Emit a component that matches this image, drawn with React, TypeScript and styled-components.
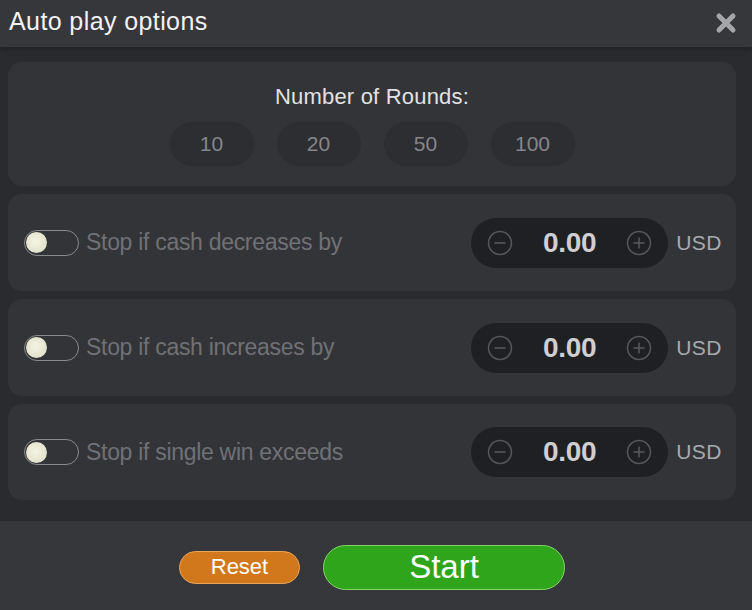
import React from "react";
import styled, { createGlobalStyle } from "styled-components";

const GlobalStyle = createGlobalStyle`
  html, body {
    margin: 0;
    padding: 0;
    background: #2a2b2f;
  }
  * {
    box-sizing: border-box;
  }
`;

const Modal = styled.div`
  width: 752px;
  height: 610px;
  display: flex;
  flex-direction: column;
  font-family: "Liberation Sans", Arial, sans-serif;
  background: #2a2b2f;
`;

const Header = styled.div`
  height: 47px;
  flex-shrink: 0;
  display: flex;
  align-items: center;
  justify-content: space-between;
  padding: 0 14px 4px 9px;
  background: #36373b;
  box-shadow: 0 2px 6px rgba(0, 0, 0, 0.25);
`;

const Title = styled.div`
  color: #f2f2f2;
  font-size: 25px;
  letter-spacing: 0.4px;
`;

const CloseButton = styled.div`
  width: 24px;
  height: 24px;
  display: flex;
  align-items: center;
  justify-content: center;
  margin-top: 2px;
`;

const Body = styled.div`
  flex: 1;
  display: flex;
  flex-direction: column;
  gap: 8px;
  padding: 15px 16px 0 8px;
`;

const Card = styled.div`
  background: #333438;
  border-radius: 14px;
`;

const RoundsCard = styled(Card)`
  height: 124px;
  display: flex;
  flex-direction: column;
  align-items: center;
  padding-top: 22px;
`;

const RoundsTitle = styled.div`
  color: #e2e2e2;
  font-size: 22px;
  letter-spacing: 0.2px;
`;

const PillRow = styled.div`
  display: flex;
  gap: 23px;
  margin-top: 12px;
`;

const Pill = styled.div`
  width: 84px;
  height: 44px;
  border-radius: 22px;
  background: #2d2e32;
  color: #85868a;
  font-size: 21px;
  display: flex;
  align-items: center;
  justify-content: center;
`;

const OptionRow = styled(Card)<{ $height: number }>`
  height: ${(p) => p.$height}px;
  display: flex;
  align-items: center;
  padding: 0 14px 0 16px;
`;

const Toggle = styled.div`
  width: 55px;
  height: 26px;
  border-radius: 13px;
  border: 1.5px solid #8a8b8e;
  padding: 1px;
  display: flex;
  align-items: center;
  flex-shrink: 0;
`;

const Knob = styled.div`
  width: 21px;
  height: 21px;
  border-radius: 50%;
  background: radial-gradient(circle at 45% 45%, #f4f4e4 0%, #e2e3cc 70%, #c9caa8 100%);
`;

const Label = styled.div`
  flex: 1;
  margin-left: 7px;
  color: #707175;
  font-size: 23px;
  letter-spacing: -0.3px;
`;

const Stepper = styled.div`
  width: 197px;
  height: 50px;
  border-radius: 25px;
  background: #1f2023;
  display: flex;
  align-items: center;
  justify-content: space-between;
  padding: 0 16px;
`;

const Value = styled.div`
  color: #cfcfd1;
  font-size: 28px;
  font-weight: 700;
  letter-spacing: -0.3px;
`;

const Currency = styled.div`
  margin-left: 8px;
  color: #a9aaad;
  font-size: 21px;
  letter-spacing: 0.5px;
`;

const Footer = styled.div`
  height: 90px;
  flex-shrink: 0;
  background: #36373b;
  display: flex;
  align-items: center;
  justify-content: center;
  gap: 23px;
  padding: 2px 8px 0 0;
  margin-top: 21px;
`;

const Button = styled.div<{ $bg: string; $border: string; $w: number; $h: number; $size: number }>`
  width: ${(p) => p.$w}px;
  height: ${(p) => p.$h}px;
  border-radius: ${(p) => p.$h / 2}px;
  background: ${(p) => p.$bg};
  border: 1.5px solid ${(p) => p.$border};
  color: #ffffff;
  font-size: ${(p) => p.$size}px;
  display: flex;
  align-items: center;
  justify-content: center;
`;

const StepIcon = ({ plus }: { plus?: boolean }) => (
  <svg width="26" height="26" viewBox="0 0 26 26">
    <circle cx="13" cy="13" r="11.5" fill="none" stroke="#56575b" strokeWidth="1.5" />
    <line x1="7.5" y1="13" x2="18.5" y2="13" stroke="#56575b" strokeWidth="1.6" />
    {plus && <line x1="13" y1="7.5" x2="13" y2="18.5" stroke="#56575b" strokeWidth="1.6" />}
  </svg>
);

const options = [
  { label: "Stop if cash decreases by", height: 97 },
  { label: "Stop if cash increases by", height: 97 },
  { label: "Stop if single win exceeds", height: 96 },
];

export default function App() {
  return (
    <Modal>
      <GlobalStyle />
      <Header>
        <Title>Auto play options</Title>
        <CloseButton>
          <svg width="22" height="22" viewBox="0 0 22 22">
            <path d="M4 4 L18 18 M18 4 L4 18" stroke="#a4a5a8" strokeWidth="5" strokeLinecap="round" />
          </svg>
        </CloseButton>
      </Header>
      <Body>
        <RoundsCard>
          <RoundsTitle>Number of Rounds:</RoundsTitle>
          <PillRow>
            {["10", "20", "50", "100"].map((n) => (
              <Pill key={n}>{n}</Pill>
            ))}
          </PillRow>
        </RoundsCard>
        {options.map((o) => (
          <OptionRow key={o.label} $height={o.height}>
            <Toggle>
              <Knob />
            </Toggle>
            <Label>{o.label}</Label>
            <Stepper>
              <StepIcon />
              <Value>0.00</Value>
              <StepIcon plus />
            </Stepper>
            <Currency>USD</Currency>
          </OptionRow>
        ))}
      </Body>
      <Footer>
        <Button $bg="#d0781b" $border="#eba557" $w={121} $h={33} $size={22}>
          Reset
        </Button>
        <Button $bg="#2fa51b" $border="#86d46a" $w={242} $h={45} $size={33}>
          Start
        </Button>
      </Footer>
    </Modal>
  );
}
